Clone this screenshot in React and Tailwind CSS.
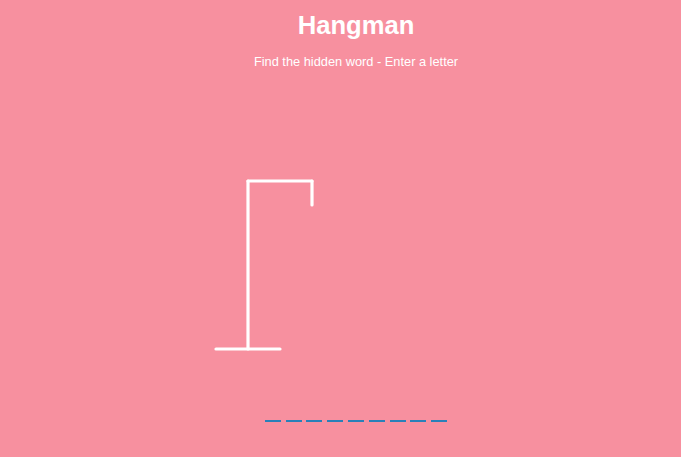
import React from 'react';

const word = ['', '', '', '', '', '', '', '', ''];

export default function App() {
  return (
    <div className="h-[457px] w-full overflow-hidden bg-[#f7909f] pl-[31px] flex flex-col items-center font-['Liberation_Sans',Arial,sans-serif] text-white">
      <h1 className="mt-[11px] text-[25.6px] leading-[29px] font-bold">Hangman</h1>
      <p className="mt-[14px] text-[12.8px] leading-[15px]">Find the hidden word - Enter a letter</p>

      {/* Game area */}
      <div className="w-[360px] mt-[96px]">
        <svg
          viewBox="0 0 200 250"
          width="160"
          height="200"
          className="block ml-[24px]"
          fill="none"
          stroke="#fff"
          strokeWidth="4"
          strokeLinecap="round"
        >
          {/* Rod */}
          <line x1="60" y1="20" x2="140" y2="20" />
          <line x1="140" y1="20" x2="140" y2="50" />
          <line x1="60" y1="20" x2="60" y2="230" />
          <line x1="20" y1="230" x2="100" y2="230" />
        </svg>

        <div className="mt-[17px] flex justify-center">
          {word.map((l, i) => (
            <span
              key={i}
              className="mx-[2.4px] w-[16px] h-[40px] border-b-2 border-[#2980b9] inline-flex items-center justify-center text-[24px]"
            >
              {l}
            </span>
          ))}
        </div>
      </div>
    </div>
  );
}
